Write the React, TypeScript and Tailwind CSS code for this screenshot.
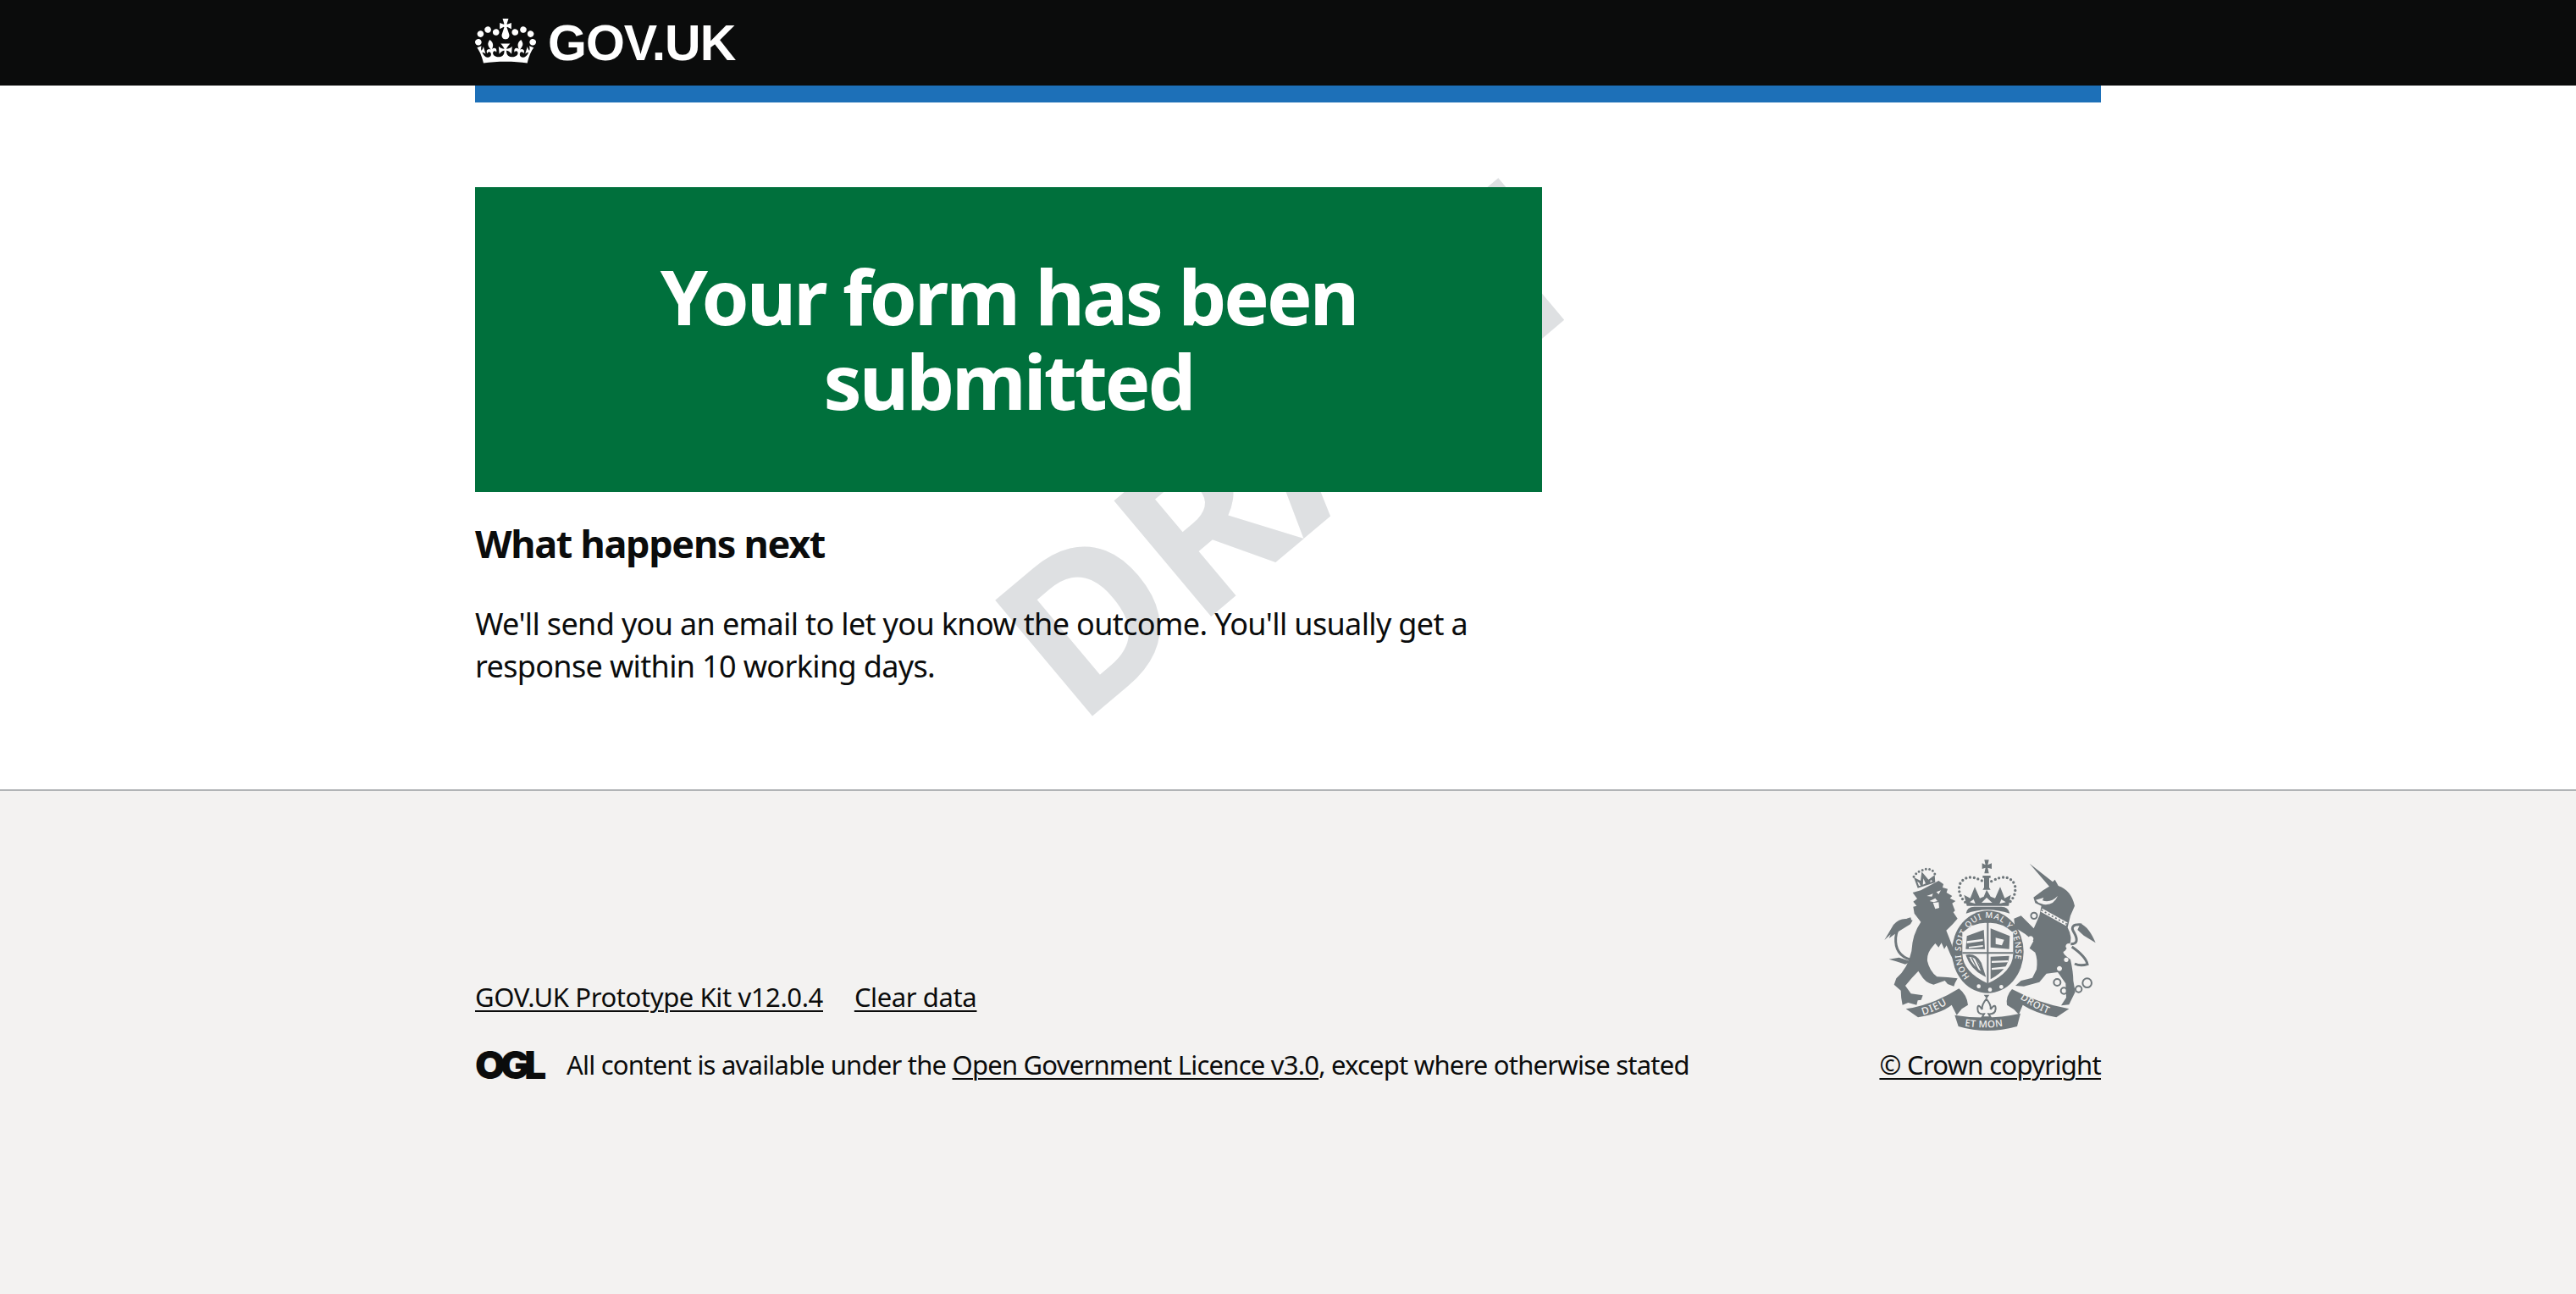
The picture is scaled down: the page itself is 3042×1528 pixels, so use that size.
import React from 'react'

const bodyFont = "font-['Noto_Sans',sans-serif]"

function Crown() {
  return (
    <svg viewBox="0 0 132 97" className="h-[53px] w-[72px] fill-white" aria-hidden="true">
      <path
        fillRule="evenodd"
        d="M25 30.2c3.5 1.5 7.7-.2 9.1-3.7 1.5-3.6-.2-7.8-3.9-9.2-3.6-1.4-7.6.3-9.1 3.9-1.4 3.5.3 7.5 3.9 9zM9 39.5c3.6 1.5 7.8-.2 9.2-3.7 1.5-3.6-.2-7.8-3.9-9.1-3.6-1.5-7.6.2-9.1 3.8-1.4 3.5.3 7.5 3.8 9zM4.4 57.2c3.5 1.5 7.7-.2 9.1-3.8 1.5-3.6-.2-7.7-3.9-9.1-3.5-1.5-7.6.3-9.1 3.8-1.4 3.5.3 7.6 3.9 9.1zm38.3-21.4c3.5 1.5 7.7-.2 9.1-3.8 1.5-3.6-.2-7.7-3.9-9.1-3.6-1.5-7.6.3-9.1 3.8-1.3 3.6.4 7.7 3.9 9.1zm64.4-5.6c-3.6 1.5-7.8-.2-9.1-3.7-1.5-3.6.2-7.8 3.8-9.2 3.6-1.4 7.7.3 9.2 3.9 1.3 3.5-.4 7.5-3.9 9zm15.9 9.3c-3.6 1.5-7.7-.2-9.1-3.7-1.5-3.6.2-7.8 3.7-9.1 3.6-1.5 7.7.2 9.2 3.8 1.5 3.5-.3 7.5-3.8 9zm4.7 17.7c-3.6 1.5-7.8-.2-9.2-3.8-1.5-3.6.2-7.7 3.9-9.1 3.6-1.5 7.7.3 9.2 3.8 1.3 3.5-.4 7.6-3.9 9.1zM89.3 35.8c-3.6 1.5-7.8-.2-9.2-3.8-1.4-3.6.2-7.7 3.9-9.1 3.6-1.5 7.7.3 9.2 3.8 1.4 3.6-.3 7.7-3.9 9.1zM69.7 17.7l8.9 4.7V9.3l-8.9 2.8c-.2-.3-.5-.6-.9-.9L72.4 0H59.6l3.5 11.2c-.3.3-.6.5-.9.9l-8.8-2.8v13.1l8.8-4.7c.3.3.6.7.9.9l-5 15.4v.1c-.2.8-.4 1.6-.4 2.4 0 4.1 3.1 7.5 7 8.1h.2c.3 0 .7.1 1 .1.4 0 .7 0 1-.1h.2c4-.6 7.1-4.1 7.1-8.1 0-.8-.1-1.7-.4-2.4V34l-5.1-15.4c.4-.2.7-.6 1-.9zM66 92.8c16.9 0 32.8 1.1 47.1 3.2 4-16.9 8.9-26.7 14-33.5l-9.6-3.4c1 4.9 1.1 7.2 0 10.2-1.5-1.4-3-4.3-4.2-8.7L108.6 76c2.8-2 5-3.2 7.5-3.3-4.4 9.4-10 11.9-13.6 11.2-4.3-.8-6.3-4.6-5.6-7.9 1-4.7 5.7-5.9 8-.5 4.3-8.7-3-11.4-7.6-8.8 7.1-7.2 7.9-13.5 2.1-21.1-8 6.1-8.1 12.3-4.5 20.8-4.7-5.4-12.1-2.5-9.5 6.2 3.4-5.2 7.9-2 7.2 3.1-.6 4.3-6.4 7.8-13.5 7.2-10.3-.9-10.9-8-11.2-13.8 2.5-.5 7.1 1.8 11 7.3L80.2 60c-4.1 4.4-8 5.3-12.3 5.4 1.4-4.4 8-11.6 8-11.6H55.5s6.4 7.2 7.9 11.6c-4.2-.1-8-1-12.3-5.4l1.4 16.4c3.9-5.5 8.5-7.7 10.9-7.3-.3 5.8-.9 12.8-11.1 13.8-7.2.6-12.9-2.9-13.5-7.2-.7-5 3.8-8.3 7.1-3.1 2.7-8.7-4.6-11.6-9.4-6.2 3.7-8.5 3.6-14.7-4.6-20.8-5.8 7.6-5 13.9 2.2 21.1-4.7-2.6-11.9.1-7.7 8.8 2.3-5.5 7.1-4.2 8.1.5.7 3.3-1.3 7.1-5.7 7.9-3.5.7-9-1.8-13.5-11.2 2.5.1 4.7 1.3 7.5 3.3l-4.7-15.4c-1.2 4.4-2.7 7.2-4.3 8.7-1.1-3-.9-5.3 0-10.2l-9.5 3.4c5 6.9 9.9 16.7 14 33.5 14.8-2.1 30.8-3.2 47.7-3.2z"
      />
    </svg>
  )
}

// traced by hand from the crest, coordinates are 3x the page pixels
function RoyalArms() {
  const grey = '#6f777b'
  const bg = '#f3f2f1'
  return (
    <svg viewBox="75 38 750 612" className="h-[204px] w-[250px]" aria-hidden="true">
      <defs>
        <path id="garter" d="M378 456 A97 120 0 1 1 510 456" />
        <path id="rib-left" d="M212 592 Q272 575 328 532" />
        <path id="rib-mid" d="M356 630 Q440 644 526 626" />
        <path id="rib-right" d="M556 534 Q610 572 678 596" />
      </defs>

      {/* lion */}
      <path fill="none" stroke={grey} strokeWidth="9" strokeDasharray="0 13" strokeLinecap="round" d="M180 102 Q190 85 208 80 Q235 66 252 86 L258 100" />
      <path fill={grey} d="M180 104 L194 142 L256 122 L254 96 L232 112 L208 84 L204 116 Z" />
      <path fill={bg} d="M192 118 L200 124 L204 134 L198 134 Z M214 108 L222 126 L212 130 Z M240 112 L246 118 L238 122 Z" />
      <path fill={grey} d="M176 158 L205 150 L268 116 L285 128 L282 140 L300 145 L296 158 L316 170 L308 178 L328 188 L316 196 L326 222 L320 228 L335 250 L318 270 L295 292 L306 320 L318 352 L340 388 L322 400 L310 378 L296 345 L288 358 L278 336 L268 352 L256 338 L246 350 Q226 372 228 400 Q236 436 262 456 L300 458 L335 462 L326 478 L322 490 L300 482 L290 470 L250 484 Q220 478 205 450 L196 436 Q170 462 150 488 L170 516 L212 522 L206 538 L194 540 L190 556 L160 548 L140 556 Q134 530 134 505 L110 484 L118 462 Q160 425 172 365 Q175 305 205 262 L182 232 L178 208 L190 205 L178 190 L192 180 Z" />
      <path fill={bg} d="M226 170 L248 162 L244 172 Z M260 156 L276 150 L268 164 Z M236 188 L256 178 L264 188 L250 192 Z M248 194 L268 192 L270 212 L256 216 Z" />
      <path fill="none" stroke={grey} strokeWidth="9" d="M170 396 Q112 380 116 318 Q122 262 170 250" />
      <path fill={grey} d="M176 256 Q135 240 108 272 L76 326 L98 306 L92 320 L122 298 L168 270 Z M92 394 L128 388 L170 402 L150 412 L118 402 Z" />

      {/* crown */}
      <path fill="none" stroke={grey} strokeWidth="10" strokeDasharray="0 14.5" strokeLinecap="round" d="M362 192 Q335 165 342 130 Q365 85 425 118 M455 118 Q515 85 538 130 Q545 165 520 192" />
      <path fill={grey} d="M430 42 L446 42 L442 60 L456 54 L456 74 L442 70 L446 90 L430 90 L434 70 L422 74 L422 54 L434 60 Z M424 98 L452 98 L452 106 L447 106 L447 140 L452 148 L424 148 L429 140 L429 106 L424 106 Z" />
      <path fill={grey} d="M358 166 L380 178 L396 138 L414 178 L428 172 L438 148 L452 172 L468 178 L486 138 L502 178 L524 166 L516 205 L368 205 Z" />
      <path fill={bg} d="M378 192 L392 182 L398 197 Z M420 194 L438 176 L458 194 Z M484 197 L490 182 L506 192 Z" />
      <path fill={grey} d="M365 232 Q368 208 395 208 L490 208 Q515 208 520 232 Q440 205 365 232 Z" />

      {/* garter and shield */}
      <ellipse cx="442" cy="368" rx="127" ry="146" fill={grey} />
      <path fill={bg} d="M352 300 Q395 262 442 266 Q490 262 532 300 L532 375 Q530 440 442 480 Q354 440 352 375 Z" />
      <path fill="none" stroke={grey} strokeWidth="6" d="M442 266 L442 480 M352 372 L532 372" />
      <path fill={grey} d="M368 312 L428 290 L432 358 L364 358 Z M452 285 L520 312 L518 358 L452 352 Z M452 385 L518 382 Q515 430 452 465 Z" />
      <path fill={bg} d="M368 330 L425 322 L425 330 L368 338 Z M375 350 L425 344 L425 350 L375 355 Z M456 400 L514 398 L514 405 L456 407 Z M456 425 L506 420 L504 428 L456 432 Z M470 318 L500 325 L492 345 L470 340 Z" />
      <path fill="none" stroke={grey} strokeWidth="9" d="M370 382 Q400 378 415 408 L428 448 Q385 425 370 382 Z" />
      <path fill="none" stroke={grey} strokeWidth="4" d="M385 388 L412 440 M396 386 L420 436" />
      <text fill={bg} className="font-['Noto_Sans',sans-serif]" fontSize="29" fontWeight="500" letterSpacing="2.5">
        <textPath href="#garter">HONI SOIT QUI MAL Y PENSE</textPath>
      </text>
      <circle cx="410" cy="490" r="7" fill={bg} />
      <circle cx="450" cy="502" r="7" fill={bg} />
      <circle cx="490" cy="492" r="7" fill={bg} />

      {/* unicorn */}
      <path fill={grey} d="M590 55 L672 120 L680 112 L692 134 Q738 150 750 205 L735 240 L725 282 Q745 320 730 345 L715 365 Q698 368 735 395 Q745 440 745 470 L752 510 L730 555 L702 558 L720 530 L718 480 L690 440 L650 445 L625 475 L570 490 L540 488 L560 470 L600 460 L615 430 Q620 395 610 370 L590 355 L604 330 L575 305 L538 282 L535 250 L560 240 L605 285 L625 240 L632 205 L610 195 L604 175 L638 150 L660 136 Z" />
      <path fill={bg} d="M612 184 L640 176 L636 186 Q664 196 690 170 Q676 204 640 200 L622 194 Z" />
      <path fill="none" stroke={bg} strokeWidth="13" d="M632 220 L722 270" />
      <path fill="none" stroke={grey} strokeWidth="5" strokeDasharray="6 8" d="M632 220 L722 270" />
      <path fill={bg} d="M594 228 a11 11 0 1 0 .1 0 Z M594 312 a10 10 0 1 0 .1 0 Z M728 338 a10 10 0 1 0 .1 0 Z M720 388 a8 8 0 1 0 .1 0 Z M696 418 a9 9 0 1 0 .1 0 Z" />
      <path fill="none" stroke={grey} strokeWidth="6" d="M606 229 a11 11 0 1 1 -.1 0 Z" />
      <path fill="none" stroke={grey} strokeWidth="9" d="M740 350 Q790 385 795 412 Q770 420 750 410 M736 340 Q770 340 748 300 Q728 268 775 272" />
      <path fill={grey} d="M770 268 Q800 278 824 336 L782 310 L760 290 Z" />
      <g fill="none" stroke={grey} strokeWidth="6">
        <circle cx="688" cy="476" r="12" />
        <circle cx="712" cy="506" r="11" />
        <circle cx="764" cy="500" r="11" />
        <circle cx="794" cy="478" r="16" />
      </g>

      {/* fleur and motto */}
      <path fill="none" stroke={grey} strokeWidth="6" d="M437 535 Q455 555 452 572 Q470 548 470 570 Q468 590 445 588 L452 600 L422 600 L429 588 Q406 590 406 570 Q406 548 422 572 Q420 555 437 535 Z" />
      <path fill={grey} d="M428 520 L448 520 L438 534 Z" />
      <path fill={grey} d="M152 570 Q250 555 340 498 Q368 520 372 556 L350 570 L332 592 L314 556 Q280 585 195 600 Z" />
      <path fill={grey} d="M730 570 Q620 550 528 500 Q505 525 510 556 L535 572 L552 590 L566 556 Q610 585 685 600 Z" />
      <path fill={grey} d="M325 592 Q440 612 558 586 L546 632 Q440 662 338 632 Z" />
      <text fill={bg} className="font-['Noto_Sans',sans-serif]" fontSize="36" fontWeight="500" letterSpacing="3">
        <textPath href="#rib-left">DIEU</textPath>
      </text>
      <text fill={bg} className="font-['Noto_Sans',sans-serif]" fontSize="34" fontWeight="500" letterSpacing="1">
        <textPath href="#rib-mid" startOffset="4">ET MON</textPath>
      </text>
      <text fill={bg} className="font-['Noto_Sans',sans-serif]" fontSize="34" fontWeight="500" letterSpacing="2">
        <textPath href="#rib-right">DROIT</textPath>
      </text>
    </svg>
  )
}

export default function App() {
  return (
    <div className={`flex min-h-screen flex-col bg-white text-[#0b0c0c] ${bodyFont}`}>
      <header className="h-[101px] bg-[#0b0c0c]">
        <div className="mx-auto flex h-[96px] w-[1920px] items-center gap-[14px]">
          <Crown />
          <span className="mt-[6px] font-['Liberation_Sans',sans-serif] text-[59px] leading-none font-bold tracking-[-1px] text-white">
            GOV.UK
          </span>
        </div>
      </header>

      <main className="relative mx-auto w-[1920px] pb-[120px]">
        <div className="h-5 bg-[#1d70b8]" />

        <div
          aria-hidden="true"
          className="absolute top-[588px] left-[570px] z-0 origin-top-left rotate-[-40deg] text-[250px] leading-none font-bold whitespace-nowrap text-[#dee0e2] select-none"
        >
          DRAFT
        </div>

        <div className="relative z-10 w-[1260px] pt-[100px]">
          <div className="bg-[#00703c] px-20 pt-[78px] pb-[82px] text-center">
            <h1 className="text-[90px] leading-[100px] font-bold tracking-[-3px] text-white">
              Your form has been submitted
            </h1>
          </div>
          <h2 className="mt-[31px] text-[45px] leading-[60px] font-bold tracking-[-1.3px]">
            What happens next
          </h2>
          <p className="mt-10 text-[36px] leading-[50px] tracking-[-0.65px]">
            We'll send you an email to let you know the outcome. You'll usually get a response
            within 10 working days.
          </p>
        </div>
      </main>

      <footer className="flex-1 border-t-2 border-[#b1b4b6] bg-[#f3f2f1] pt-20 text-[31px] leading-[40px]">
        <div className="mx-auto flex w-[1920px] items-end justify-between">
          <div>
            <div className="flex gap-[37px] tracking-[-0.4px] underline decoration-2 underline-offset-[4px]">
              <a>GOV.UK Prototype Kit v12.0.4</a>
              <a>Clear data</a>
            </div>
            <div className="mt-10 flex items-center gap-[26px]">
              <span className="w-[82px] font-['Inter',sans-serif] text-[46px] leading-[34px] font-black tracking-[-6px]">
                OGL
              </span>
              <span className="tracking-[-0.78px]">
                All content is available under the{' '}
                <a className="underline decoration-2 underline-offset-[4px]">
                  Open Government Licence v3.0
                </a>
                , except where otherwise stated
              </span>
            </div>
          </div>
          <div className="flex flex-col items-center gap-[19px]">
            <RoyalArms />
            <a className="tracking-[-0.7px] underline decoration-2 underline-offset-[4px]">
              © Crown copyright
            </a>
          </div>
        </div>
      </footer>
    </div>
  )
}
